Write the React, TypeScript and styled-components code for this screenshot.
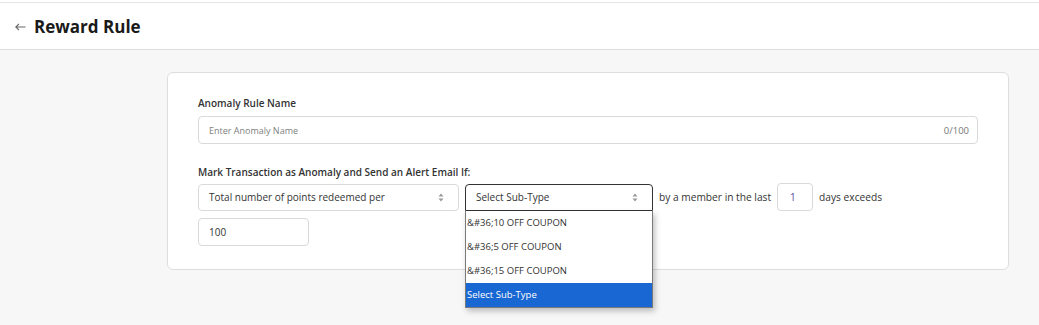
import { FC } from 'react';
import styled, { createGlobalStyle } from 'styled-components';

const GlobalStyle = createGlobalStyle`
	body {
		margin: 0;
		background: #f7f7f7;
		font-family: "Open Sans", "Liberation Sans", sans-serif;
		color: #333;
	}
`;

const subTypes = ['&#36;10 OFF COUPON', '&#36;5 OFF COUPON', '&#36;15 OFF COUPON', 'Select Sub-Type'];

const SortIcon: FC = () => (
	<svg width="6" height="9" viewBox="0 0 6 9">
		<path d="M3 0.5 L5.5 3.5 H0.5 Z M3 8.5 L5.5 5.5 H0.5 Z" fill="#999" />
	</svg>
);

const App: FC = () => {
	return (
		<>
			<GlobalStyle />
			<TopStrip>
				<Header>
					<BackButton>
						<svg width="11" height="8" viewBox="0 0 11 8">
							<path d="M10.5 4 H1 M4 0.8 L0.8 4 L4 7.2" stroke="#666" strokeWidth="1.1" fill="none" />
						</svg>
					</BackButton>
					<Title>Reward Rule</Title>
				</Header>
			</TopStrip>
			<Content>
				<Card>
					<Label>Anomaly Rule Name</Label>
					<NameField>
						<Placeholder>Enter Anomaly Name</Placeholder>
						<Counter>0/100</Counter>
					</NameField>
					<Label $top={21}>Mark Transaction as Anomaly and Send an Alert Email If:</Label>
					<ConditionRow>
						<Select $width={261}>
							<span>Total number of points redeemed per</span>
							<SortIcon />
						</Select>
						<SelectWrap>
							<Select $width={188} $focused>
								<span>Select Sub-Type</span>
								<SortIcon />
							</Select>
							<OptionList>
								{subTypes.map((t, i) => (
									<Option key={t} $active={i === subTypes.length - 1}>{t}</Option>
								))}
							</OptionList>
						</SelectWrap>
						<InlineText>by a member in the last</InlineText>
						<SmallInput $width={36} $pad={12} $accent>1</SmallInput>
						<InlineText>days exceeds</InlineText>
					</ConditionRow>
					<SmallInput $width={111} $pad={10}>100</SmallInput>
				</Card>
			</Content>
		</>
	);
};

export default App;

const TopStrip = styled.div`
	background: #fff;
	padding-top: 2px;
`;

const Header = styled.header`
	display: flex;
	align-items: center;
	height: 46px;
	padding-left: 15px;
	border-top: 1px solid #e6e6e6;
	border-bottom: 1px solid #dcdcdc;
	background: #fff;
`;

const BackButton = styled.span`
	display: flex;
	align-items: center;
	width: 19px;
	padding-top: 1px;
`;

const Title = styled.h1`
	margin: 0;
	font-size: 17px;
	font-weight: 700;
	color: #1a1a1a;
`;

const Content = styled.main`
	padding: 22px 30px 60px 167px;
`;

const Card = styled.section`
	display: flex;
	flex-direction: column;
	align-items: flex-start;
	background: #fff;
	border: 1px solid #dedede;
	border-radius: 6px;
	padding: 23px 30px 23px 30px;
`;

const Label = styled.div<{ $top?: number }>`
	font-size: 10px;
	font-weight: 600;
	color: #333;
	margin-top: ${p => p.$top ?? 0}px;
	margin-bottom: 6px;
	line-height: 14px;
`;

const NameField = styled.div`
	display: flex;
	align-items: center;
	justify-content: space-between;
	align-self: stretch;
	height: 26px;
	padding: 0 8px 0 10px;
	border: 1px solid #d9d9d9;
	border-radius: 4px;
	font-size: 9px;
`;

const Placeholder = styled.span`
	color: #808080;
`;

const Counter = styled.span`
	color: #777;
	font-size: 9.5px;
`;

const ConditionRow = styled.div`
	display: flex;
	align-items: center;
	gap: 6px;
	margin-top: -2px;
	margin-bottom: 7px;
`;

const SelectWrap = styled.div`
	position: relative;
`;

const Select = styled.div<{ $width: number; $focused?: boolean }>`
	display: flex;
	align-items: center;
	justify-content: space-between;
	box-sizing: border-box;
	width: ${p => p.$width}px;
	height: 27px;
	padding: 0 14px 0 10px;
	border: 1px solid ${p => (p.$focused ? '#333' : '#d9d9d9')};
	border-radius: ${p => (p.$focused ? '4px 4px 0 0' : '4px')};
	font-size: 10px;
	color: #333;
	background: #fff;
`;

const OptionList = styled.ul`
	position: absolute;
	top: 27px;
	left: 0;
	box-sizing: border-box;
	width: 188px;
	margin: 0;
	padding: 0;
	list-style: none;
	background: #fff;
	border: 1px solid #7a7a7a;
	border-top: none;
	box-shadow: 2px 3px 6px rgba(0, 0, 0, 0.25);
	z-index: 2;
`;

const Option = styled.li<{ $active?: boolean }>`
	height: 24px;
	line-height: 24px;
	padding-left: 1px;
	font-size: 9.5px;
	color: ${p => (p.$active ? '#fff' : '#333')};
	background: ${p => (p.$active ? '#1967d2' : '#fff')};
`;

const InlineText = styled.span`
	font-size: 10.2px;
	color: #333;
`;

const SmallInput = styled.div<{ $width: number; $pad: number; $accent?: boolean }>`
	display: flex;
	align-items: center;
	box-sizing: border-box;
	width: ${p => p.$width}px;
	height: 28px;
	padding-left: ${p => p.$pad}px;
	border: 1px solid #d9d9d9;
	border-radius: 4px;
	font-size: 10px;
	color: ${p => (p.$accent ? '#5b4b9b' : '#333')};
`;
